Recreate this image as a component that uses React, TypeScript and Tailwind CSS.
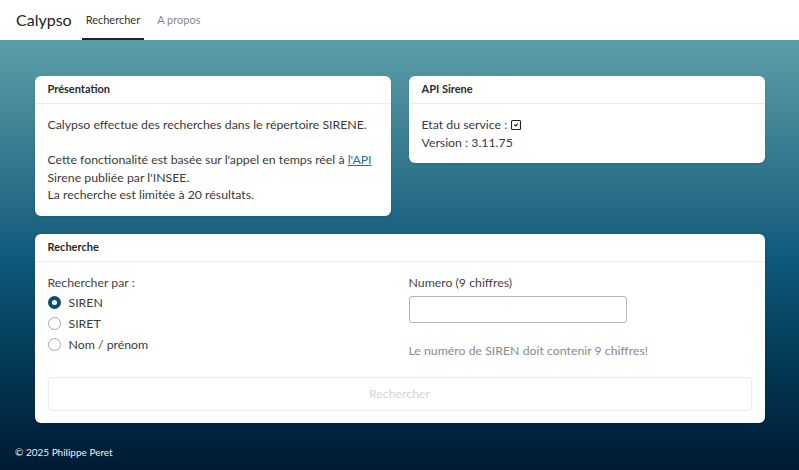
import { SquareCheck } from 'lucide-react';

const font = { fontFamily: 'Lato, "Open Sans", sans-serif' };

function Card({ title, children }: { title: string; children: React.ReactNode }) {
  return (
    <section className="rounded-[6px] bg-white shadow-sm">
      <header className="flex h-[28px] items-center border-b border-[#ececec] px-[13px] text-[11px] font-bold text-[#2a2a2a]">
        {title}
      </header>
      <div className="px-[13px] pb-[12px] pt-[12px] text-[12.3px] leading-[17.5px] text-[#3a3a3a]">
        {children}
      </div>
    </section>
  );
}

function Radio({ label, checked }: { label: string; checked?: boolean }) {
  return (
    <label className="flex h-[21px] items-center gap-[8px]">
      {checked ? (
        <span className="h-[13px] w-[13px] rounded-full border-[4px] border-[#0b4f6c] bg-white" />
      ) : (
        <span className="h-[13px] w-[13px] rounded-full border border-[#a8a8a8] bg-white" />
      )}
      <span>{label}</span>
    </label>
  );
}

export default function App() {
  return (
    <div className="flex min-h-screen flex-col" style={font}>
      {/* Top navigation */}
      <nav className="flex h-[40px] items-center bg-white pl-[16px]">
        <span className="mr-[10px] text-[16px] text-[#222]">Calypso</span>
        <a className="flex h-[40px] items-center border-b-[2px] border-[#222] px-[4px] pt-[2px] text-[11px] text-[#333]">
          Rechercher
        </a>
        <a className="ml-[9px] px-[4px] text-[11px] text-[#888]">A propos</a>
      </nav>

      <main className="flex flex-1 flex-col bg-gradient-to-b from-[#5c9fa8] via-[#0f5b7b] to-[#001a33]">
        <div className="mx-auto flex w-[730px] flex-col gap-[18px] pt-[36px]">
          <div className="grid grid-cols-2 items-start gap-[18px]">
            <Card title="Présentation">
              <p>Calypso effectue des recherches dans le répertoire SIRENE.</p>
              <br />
              <p>
                Cette fonctionalité est basée sur l'appel en temps réel à{' '}
                <a className="text-[#1d6fa8] underline">l'API</a> Sirene publiée par l'INSEE.
              </p>
              <p>La recherche est limitée à 20 résultats.</p>
            </Card>
            <Card title="API Sirene">
              <p className="flex items-center gap-[3px]">
                Etat du service : <SquareCheck size={12} strokeWidth={2.2} className="text-[#222]" />
              </p>
              <p>Version : 3.11.75</p>
            </Card>
          </div>

          <Card title="Recherche">
            <div className="grid grid-cols-2 gap-[18px]">
              <div>
                <p className="mb-[1px] text-[#444]">Rechercher par :</p>
                <Radio label="SIREN" checked />
                <Radio label="SIRET" />
                <Radio label="Nom / prénom" />
              </div>
              <div>
                <p className="mb-[5px] text-[#444]">Numero (9 chiffres)</p>
                <input className="h-[27px] w-[218px] rounded-[3px] border border-[#b5b5b5] bg-white px-2 outline-none" />
                <p className="mt-[19px] text-[#8a8a8a]">Le numéro de SIREN doit contenir 9 chiffres!</p>
              </div>
            </div>
            <button
              disabled
              className="mt-[17px] flex h-[34px] w-full items-center justify-center rounded-[3px] border border-[#ececec] bg-white text-[#d4d4d4]"
            >
              Rechercher
            </button>
          </Card>
        </div>

        <footer className="mt-auto px-[15px] pb-[10px] pt-[20px] text-[10px] text-[#e8eef2]">
          © 2025 Philippe Peret
        </footer>
      </main>
    </div>
  );
}
